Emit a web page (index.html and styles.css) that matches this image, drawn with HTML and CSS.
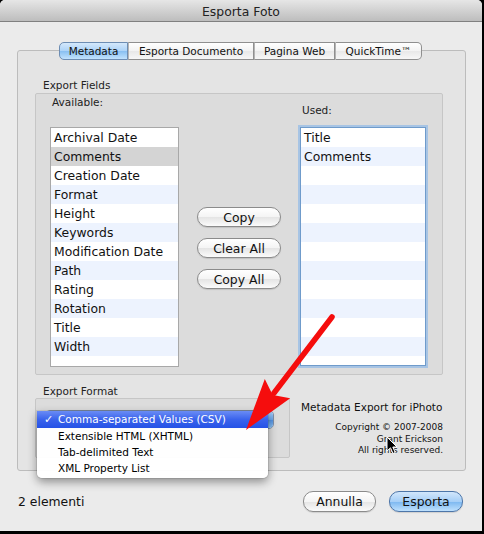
FILE: index.html
```html
<!DOCTYPE html>
<html lang="it">
<head>
  <meta charset="UTF-8">
  <meta name="viewport" content="width=device-width, initial-scale=1.0">
  <title>Esporta Foto</title>
  <link rel="stylesheet" href="styles.css">
</head>
<body>

  <div class="window">
    <div class="titlebar">Esporta Foto</div>

    <div class="tabs">
      <span class="tab selected t-meta">Metadata</span>
      <span class="tab t-doc">Esporta Documento</span>
      <span class="tab t-web">Pagina Web</span>
      <span class="tab t-qt">QuickTime™</span>
    </div>

    <div class="tabbox">
      <div class="group-title">Export Fields</div>
      <div class="group fields">
        <div class="col avail">
          <div class="col-label">Available:</div>
          <ul class="list">
            <li>Archival Date</li>
            <li class="selected">Comments</li>
            <li>Creation Date</li>
            <li>Format</li>
            <li>Height</li>
            <li>Keywords</li>
            <li>Modification Date</li>
            <li>Path</li>
            <li>Rating</li>
            <li>Rotation</li>
            <li>Title</li>
            <li>Width</li>
            <li></li>
          </ul>
        </div>

        <div class="col actions">
          <button class="push">Copy</button>
          <button class="push">Clear All</button>
          <button class="push">Copy All</button>
        </div>

        <div class="col used">
          <div class="col-label">Used:</div>
          <ul class="list focused">
            <li>Title</li>
            <li>Comments</li>
            <li></li>
            <li></li>
            <li></li>
            <li></li>
            <li></li>
            <li></li>
            <li></li>
            <li></li>
            <li></li>
            <li></li>
            <li></li>
          </ul>
        </div>
      </div>

      <div class="format-row">
        <div class="format">
          <div class="group-title">Export Format</div>
          <div class="group format-box">
            <div class="popup"><span class="popup-end"></span></div>
            <ul class="menu">
              <li class="current"><span class="check">✓</span>Comma-separated Values (CSV)</li>
              <li>Extensible HTML (XHTML)</li>
              <li>Tab-delimited Text</li>
              <li>XML Property List</li>
            </ul>
          </div>
        </div>

        <div class="about">
          <div class="about-name">Metadata Export for iPhoto</div>
          <div class="about-copy">
            Copyright © 2007-2008<br>
            Grant Erickson<br>
            All rights reserved.
          </div>
        </div>
      </div>
    </div>

    <div class="footer">
      <span class="count">2 elementi</span>
      <div class="footer-buttons">
        <button class="push wide">Annulla</button>
        <button class="push wide default">Esporta</button>
      </div>
    </div>

    <!-- red pointer drawn over the dialog -->
    <svg class="arrow" width="482" height="531" viewBox="0 0 482 531">
      <line x1="332" y1="317" x2="274" y2="393" stroke="#f50d0d" stroke-width="5.5" stroke-linecap="round"/>
      <polygon points="246,430 264.8,378.9 272.7,395 290.2,398.3" fill="#f50d0d"/>
    </svg>

    <!-- mouse pointer -->
    <svg class="cursor" width="14" height="20" viewBox="0 0 14 20">
      <path d="M1 1 L1 15 L4.5 11.8 L7 17.5 L9.2 16.5 L6.8 11 L11 11 Z" fill="#000" stroke="#fff" stroke-width="1"/>
    </svg>
  </div>

</body>
</html>
```

FILE: styles.css
```css
body {
  margin: 0;
  background-color: #000;
  font-family: "DejaVu Sans", "Liberation Sans", sans-serif;
  color: #111;
}

.window {
  position: relative;
  width: 482px;
  height: 531px;
  background-color: #ebebeb;
  border-radius: 5px 5px 0 0;
  overflow: hidden;
}

.titlebar {
  height: 21px;
  line-height: 24px;
  border-bottom: 1px solid #808080;
  background: linear-gradient(#e6e6e6, #bdbdbd);
  text-align: center;
  font-size: 12.4px;
  color: #222;
}

/* segmented tab control */
.tabs {
  position: relative;
  z-index: 1;
  display: flex;
  margin: 20px 0 -10px 59px;
  height: 18px;
}

.tab {
  box-sizing: border-box;
  height: 18px;
  line-height: 16px;
  border: 1px solid #8f8f8f;
  border-left: 1px solid #b4b4b4;
  background: linear-gradient(#ffffff, #f3f3f3 50%, #e8e8e8 51%, #f7f7f7);
  font-size: 10.5px;
  text-align: center;
}

.tab:first-child {
  border-left-color: #8f8f8f;
  border-radius: 5px 0 0 5px;
}

.tab:last-child {
  border-radius: 0 5px 5px 0;
}

.tab.selected {
  border-color: #6d8db3;
  background: linear-gradient(#d4e8fb, #acd3f7 50%, #88bff1 51%, #c2e3fd);
}

.t-meta { width: 69px; }
.t-doc { width: 126px; }
.t-web { width: 81px; }
.t-qt { width: 87px; }

.tabbox {
  box-sizing: border-box;
  margin-left: 17px;
  width: 449px;
  height: 421px;
  padding: 28px 22px 0 17px;
  border: 1px solid #bcbcbc;
  border-radius: 3px;
  background-color: #e4e4e4;
}

.group-title {
  line-height: 13px;
  margin: 0 0 1px 8px;
  font-size: 10.5px;
  color: #222;
}

.group {
  box-sizing: border-box;
  border: 1px solid #c6c6c6;
  border-radius: 2px;
  background-color: #dcdcdc;
}

.fields {
  display: flex;
  align-items: flex-start;
  height: 282px;
  padding-left: 14px;
}

.col-label {
  line-height: 13px;
  padding-left: 2px;
  font-size: 10.5px;
  color: #222;
}

.avail {
  margin-top: 2px;
}

.list {
  box-sizing: border-box;
  list-style: none;
  margin: 0;
  padding: 0;
  overflow: hidden;
  background-color: #fff;
  border: 1px solid #a8a8a8;
}

.list li {
  height: 19px;
  line-height: 19px;
  padding-left: 3px;
  font-size: 12.4px;
  white-space: nowrap;
}

.list li:nth-child(even) {
  background-color: #edf3fe;
}

.list li.selected {
  background-color: #d4d4d4;
}

.avail .list {
  margin-top: 18px;
  width: 129px;
  height: 240px;
}

.actions {
  display: flex;
  flex-direction: column;
  gap: 11px;
  margin: 113px 0 0 18px;
  width: 84px;
}

.used {
  margin: 10px 0 0 19px;
}

.used .list {
  margin-top: 10px;
  width: 126px;
  height: 239px;
  border-color: #6f9bcb;
  box-shadow: 0 0 0 2px #a7c4e4;
}

/* aqua push buttons */
.push {
  height: 20px;
  padding: 0;
  border: 1px solid #8b8b8b;
  border-radius: 10px;
  background: linear-gradient(#ffffff, #f4f4f4 50%, #e4e4e4 51%, #fbfbfb);
  box-shadow: 0 1px 1px rgba(0, 0, 0, 0.12);
  font-family: inherit;
  font-size: 12.4px;
  color: #111;
}

.push.wide {
  height: 21px;
  width: 73px;
}

.push.default {
  width: 74px;
  border-color: #4d76a9;
  background: linear-gradient(#d2e7fc, #a6cff7 50%, #7bb7f0 51%, #bfe1fd);
}

.format-row {
  display: flex;
  margin-top: 10px;
}

.format {
  width: 255px;
}

.format .group-title {
  margin-bottom: 0;
}

.format-box {
  position: relative;
  height: 60px;
  padding: 11px 0 0 9px;
}

.popup {
  box-sizing: border-box;
  position: relative;
  width: 229px;
  height: 19px;
  border: 1px solid #7e8ea6;
  border-radius: 5px;
  background: #fff;
}

.popup-end {
  position: absolute;
  top: 0;
  right: 0;
  bottom: 0;
  width: 18px;
  border-radius: 0 4px 4px 0;
  background: linear-gradient(#a9cdf5, #6ea7ea 50%, #4f8fe2 51%, #8cc1f3);
}

/* open popup menu */
.menu {
  position: absolute;
  left: 1px;
  top: 12px;
  width: 231px;
  margin: 0;
  padding: 0 0 2px;
  list-style: none;
  background-color: rgba(255, 255, 255, 0.97);
  border-radius: 0 0 5px 5px;
  box-shadow: 0 4px 10px rgba(0, 0, 0, 0.4), 0 0 0 1px rgba(0, 0, 0, 0.08);
}

.menu li {
  height: 16px;
  line-height: 16px;
  padding-left: 21px;
  font-size: 10.5px;
  color: #000;
}

.menu li.current {
  position: relative;
  height: 17px;
  line-height: 17px;
  background: linear-gradient(#6a8cf5, #3a63ec 50%, #2552e6);
  color: #fff;
}

.check {
  position: absolute;
  left: 7px;
  font-size: 11px;
}

.about {
  margin: 16px 0 0 11px;
  width: 142px;
}

.about-name {
  line-height: 13px;
  font-size: 10.5px;
  white-space: nowrap;
}

.about-copy {
  margin-top: 8px;
  line-height: 11.5px;
  font-size: 9px;
  text-align: right;
}

.footer {
  display: flex;
  align-items: center;
  justify-content: space-between;
  height: 60px;
  padding: 0 19px 0 18px;
}

.count {
  font-size: 12.4px;
}

.footer-buttons {
  display: flex;
  gap: 13px;
}

.arrow {
  position: absolute;
  left: 0;
  top: 0;
  pointer-events: none;
}

.cursor {
  position: absolute;
  left: 386px;
  top: 436px;
  pointer-events: none;
}
```
